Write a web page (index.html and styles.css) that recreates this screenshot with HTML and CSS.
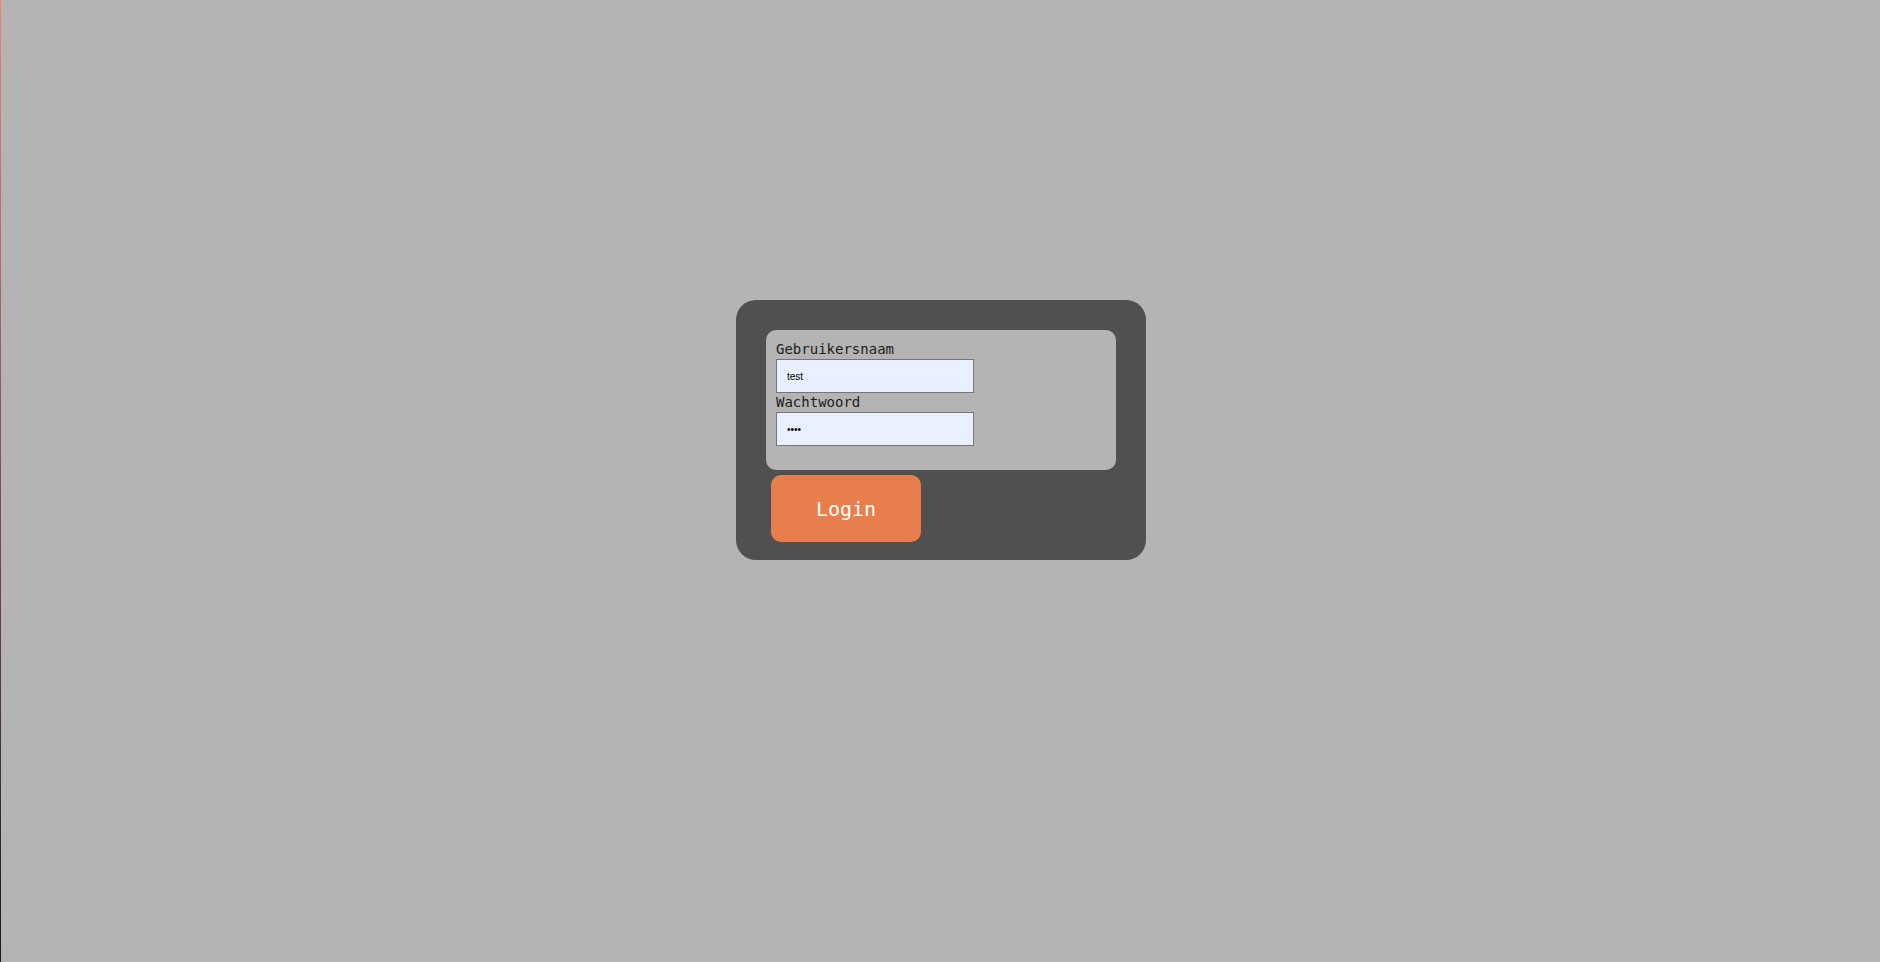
FILE: index.html
```html
<!DOCTYPE html>
<html>
<head>
<meta charset="utf-8">
<title>Login</title>
<link rel="stylesheet" href="styles.css">
</head>
<body>
<div class="edge"></div>
<main class="page">
  <form class="card">
    <div class="fields">
      <label class="label" for="user">Gebruikersnaam</label>
      <input class="input" id="user" type="text" value="test">
      <label class="label" for="pass">Wachtwoord</label>
      <input class="input" id="pass" type="password" value="test">
    </div>
    <button class="login" type="button">Login</button>
  </form>
</main>
</body>
</html>
```

FILE: styles.css
```css
html, body {
  margin: 0;
  padding: 0;
  height: 100%;
}
body {
  background: #b4b4b4;
  overflow: hidden;
}
.edge {
  position: fixed;
  left: 0;
  top: 0;
  width: 1px;
  height: 100%;
  background: linear-gradient(to bottom, #f08080, #1a1a1a);
}
.page {
  display: flex;
  justify-content: center;
  padding-top: 300px;
  padding-left: 2px;
}
.card {
  width: 410px;
  box-sizing: border-box;
  background: #505050;
  border-radius: 20px;
  padding: 30px 30px 18px;
  display: flex;
  flex-direction: column;
  align-items: flex-start;
}
.fields {
  width: 350px;
  height: 140px;
  flex-shrink: 0;
  box-sizing: border-box;
  background: #b4b4b4;
  border-radius: 10px;
  padding: 10px 10px;
  display: flex;
  flex-direction: column;
  align-items: flex-start;
}
.label {
  font-family: "DejaVu Sans Mono", "Liberation Mono", monospace;
  font-size: 14px;
  line-height: 19px;
  color: #1c1c1c;
}
.input {
  width: 198px;
  height: 34px;
  box-sizing: border-box;
  margin: 0;
  border: 1px solid #767676;
  background: #e8f0fe;
  padding: 0 10px;
  font-family: "Liberation Sans", Arial, sans-serif;
  font-size: 10px;
  color: #000;
  outline: none;
}
.login {
  flex-shrink: 0;
  margin: 5px 0 0 5px;
  width: 150px;
  height: 67px;
  border: none;
  border-radius: 10px;
  background: #e97e4d;
  color: #ffffff;
  font-family: "DejaVu Sans Mono", monospace;
  font-size: 20px;
  padding: 0;
  cursor: pointer;
}
```
